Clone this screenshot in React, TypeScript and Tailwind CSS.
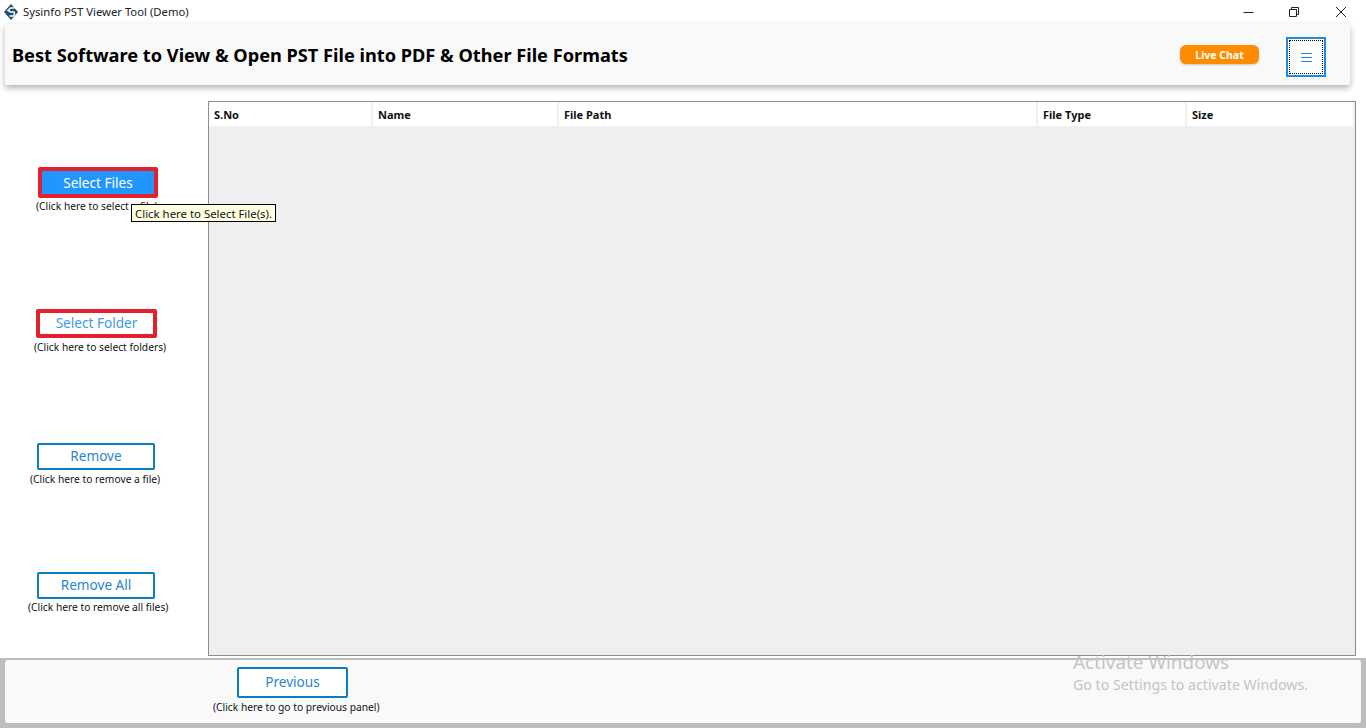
import React from "react";

const uiFont = "font-['Noto_Sans',sans-serif]";

function Logo() {
  return (
    <svg width="14" height="16" viewBox="0 0 14 16" className="shrink-0">
      <path d="M7 0 L14 8 L7 16 L0 8 Z" fill="#1d4f6e" />
      <path d="M10.5 4 H6.5 L4 6.5 L6.5 8 H10 L10.5 10 L9.5 12 H5.5" fill="none" stroke="#fff" strokeWidth="1.5" />
    </svg>
  );
}

function WindowControls() {
  return (
    <div className="flex items-center">
      <svg width="11" height="12" viewBox="0 0 11 12" className="mr-[34px]">
        <path d="M0.5 6.5 H10.5" stroke="#222" strokeWidth="1" />
      </svg>
      <svg width="12" height="12" viewBox="0 0 12 12" className="mr-[35px]">
        <path d="M1.5 3.5 H8.5 V10.5 H1.5 Z M3.5 3.5 V1.5 H10.5 V8.5 H8.5" fill="none" stroke="#222" strokeWidth="1" />
      </svg>
      <svg width="12" height="12" viewBox="0 0 12 12" className="mr-[19px]">
        <path d="M1 1 L11 11 M11 1 L1 11" stroke="#222" strokeWidth="1" />
      </svg>
    </div>
  );
}

function SideAction({ label, hint, btn, hintCls }: { label: string; hint: string; btn: string; hintCls: string }) {
  return (
    <div>
      <button className={`flex items-center justify-center text-[13.6px] leading-none ${btn}`}>{label}</button>
      <div className={`text-[10.25px] leading-[14px] text-[#111] whitespace-nowrap ${hintCls}`}>{hint}</div>
    </div>
  );
}

const columns = [
  { name: "S.No", w: "w-[164px]" },
  { name: "Name", w: "w-[186px]" },
  { name: "File Path", w: "w-[479px]" },
  { name: "File Type", w: "w-[149px]" },
  { name: "Size", w: "w-[168px]" },
];

export default function App() {
  return (
    <div className={`relative w-[1366px] h-[728px] overflow-hidden bg-white flex flex-col ${uiFont}`}>
      <div className="h-[24px] flex items-center justify-between pl-[4px] shrink-0">
        <div className="flex items-center gap-[5px]">
          <Logo />
          <span className="text-[11.3px] text-[#222]">Sysinfo PST Viewer Tool (Demo)</span>
        </div>
        <WindowControls />
      </div>

      <div className="ml-[5px] w-[1345px] h-[61px] shrink-0 bg-[#f9f9f9] rounded-[2px] shadow-[0_3px_6px_rgba(0,0,0,0.3)] flex items-center pl-[7px] pr-[24px]">
        <h1 className="text-[18.2px] font-bold text-black whitespace-nowrap pt-[2px]">
          Best Software to View &amp; Open PST File into PDF &amp; Other File Formats
        </h1>
        <button className="ml-auto w-[79px] h-[19px] pt-[2px] rounded-[6px] bg-[#ff8c00] text-white text-[10.5px] font-bold flex items-center justify-center shadow-[0_1px_2px_rgba(0,0,0,0.2)]">
          Live Chat
        </button>
        <button className="ml-[27px] mt-[5px] w-[40px] h-[40px] border-2 border-[#1e88e5] bg-white flex items-center justify-center p-px">
          <span className="w-full h-full border border-dotted border-black flex items-center justify-center">
            <svg width="11" height="11" viewBox="0 0 11 11">
              <path d="M0 1.5 H11 M0 5.5 H11 M0 9.5 H11" stroke="#2e86d0" strokeWidth="1" />
            </svg>
          </span>
        </button>
      </div>

      <div className="flex-1 flex min-h-0">
        <div className="w-[208px] shrink-0">
          <div className="pt-[82px]">
            <SideAction
              label="Select Files"
              hint="(Click here to select a file)"
              btn="ml-[38px] w-[120px] h-[31px] border-[4px] border-[#e3202e] rounded-[2px] bg-[#2196ff] text-white"
              hintCls="ml-[36px] mt-[1px]"
            />
          </div>
          <div className="mt-[96px]">
            <SideAction
              label="Select Folder"
              hint="(Click here to select folders)"
              btn="ml-[36px] w-[121px] h-[29px] pb-[2px] border-[4px] border-[#e3202e] rounded-[2px] bg-white text-[#3d9be9]"
              hintCls="ml-[34px] mt-[2px]"
            />
          </div>
          <div className="mt-[89px]">
            <SideAction
              label="Remove"
              hint="(Click here to remove a file)"
              btn="ml-[37px] w-[118px] h-[27px] pb-[2px] border-2 border-[#0a7cc4] rounded-[2px] bg-white text-[#2a84cf]"
              hintCls="ml-[30px] mt-[2px]"
            />
          </div>
          <div className="mt-[86px]">
            <SideAction
              label="Remove All"
              hint="(Click here to remove all files)"
              btn="ml-[37px] w-[118px] h-[27px] pb-[2px] border-2 border-[#0a7cc4] rounded-[2px] bg-white text-[#2a84cf]"
              hintCls="ml-[28px] mt-[1px]"
            />
          </div>
        </div>

        <div className="mt-[16px] w-[1148px] h-[555px] border border-[#8c8c8c] bg-[#efefef] shrink-0">
          <div className="flex h-[24px] bg-white pr-[2px]">
            {columns.map((c) => (
              <div key={c.name} className={`${c.w} shrink-0 h-full border-r-2 border-[#f0f0f0] pl-[5px] pt-[2px] flex items-center text-[11px] font-bold text-[#111]`}>
                {c.name}
              </div>
            ))}
          </div>
        </div>
      </div>

      <div className="h-[70px] shrink-0 bg-[#bdbdbd] pt-[2px] pl-[5px] pr-[5px]">
        <div className="h-[63px] bg-[#f9f9f9] rounded-[3px] flex flex-col items-start">
          <button className="ml-[232px] mt-[7px] w-[111px] h-[31px] border-2 border-[#0a7cc4] rounded-[2px] bg-white text-[#2a84cf] text-[13.6px] flex items-center justify-center">
            Previous
          </button>
          <div className="ml-[208px] mt-[2px] text-[10.25px] leading-[14px] text-[#111] whitespace-nowrap">
            (Click here to go to previous panel)
          </div>
        </div>
      </div>

      <div className="absolute left-[131px] top-[204px] h-[18px] px-[3px] border border-black bg-[#ffffe1] text-[11.4px] leading-[17px] text-[#111] whitespace-nowrap">
        Click here to Select File(s).
      </div>

      <div className="absolute left-[1073px] top-[650px] text-[#c4c4c4] whitespace-nowrap pointer-events-none">
        <div className="text-[18.9px] leading-[24px]">Activate Windows</div>
        <div className="text-[14.2px] leading-[20px] mt-[1px]">Go to Settings to activate Windows.</div>
      </div>
    </div>
  );
}
